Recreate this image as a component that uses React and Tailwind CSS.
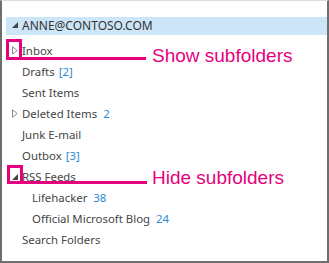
const folders = [
  { name: 'Inbox', arrow: 'closed' },
  { name: 'Drafts', count: '[2]' },
  { name: 'Sent Items' },
  { name: 'Deleted Items', arrow: 'closed', count: '2', wide: true },
  { name: 'Junk E-mail' },
  { name: 'Outbox', count: '[3]' },
  { name: 'RSS Feeds', arrow: 'open' },
  { name: 'Lifehacker', count: '38', wide: true, sub: true },
  { name: 'Official Microsoft Blog', count: '24', wide: true, sub: true },
  { name: 'Search Folders' },
];

function Arrow({ type }) {
  if (type === 'closed') {
    return (
      <svg width="6" height="9" viewBox="0 0 6 9" className="absolute left-[10px] top-[6px]">
        <path d="M0.5 0.8 L5.2 4.5 L0.5 8.2 Z" fill="none" stroke="#8a8a8a" strokeWidth="1" />
      </svg>
    );
  }
  return (
    <svg width="6" height="6" viewBox="0 0 6 6" className="absolute left-[10px] top-[8px]">
      <path d="M6 0 L6 6 L0 6 Z" fill="#444" />
    </svg>
  );
}

export default function App() {
  return (
    <div className="relative w-[329px] h-[263px] bg-white border-t border-t-[#dcdcdc] border-x-2 border-b-2 border-[#6e6e6e] overflow-hidden" style={{ fontFamily: '"Noto Sans", sans-serif' }}>
      {/* account header */}
      <div className="mt-[16px] ml-[4px] h-[18px] bg-[#cde6f7] relative flex items-center pl-[16px] text-[12px] text-[#333]">
        <svg width="6" height="6" viewBox="0 0 6 6" className="absolute left-[6px] top-[5px]">
          <path d="M6 0 L6 6 L0 6 Z" fill="#444" />
        </svg>
        ANNE@CONTOSO.COM
      </div>

      {/* folder list */}
      <div className="mt-[5px] flex flex-col">
        {folders.map((f) => (
          <div key={f.name} className={`relative h-[21px] flex items-center text-[11.4px] text-[#444] ${f.sub ? 'pl-[30px]' : 'pl-[20px]'}`}>
            {f.arrow && <Arrow type={f.arrow} />}
            <span>{f.name}</span>
            {f.count && <span className={`text-[#2b8ad6] ${f.wide ? 'ml-[6px]' : 'ml-[4px]'}`}>{f.count}</span>}
          </div>
        ))}
      </div>

      {/* annotations */}
      <div className="absolute left-[4px] top-[38px] w-[16px] h-[21px] border-[3px] border-[#e5007d]" />
      <div className="absolute left-[4px] top-[56px] w-[140px] h-[3px] bg-[#e5007d]" />
      <div className="absolute left-[150px] top-[44px] text-[19px] leading-[22px] text-[#e5007d]" style={{ fontFamily: '"Liberation Sans", Arial, sans-serif' }}>Show subfolders</div>

      <div className="absolute left-[5px] top-[164px] w-[16px] h-[19px] border-[3px] border-[#e5007d]" />
      <div className="absolute left-[5px] top-[180px] w-[140px] h-[3px] bg-[#e5007d]" />
      <div className="absolute left-[150px] top-[166px] text-[19px] leading-[22px] text-[#e5007d]" style={{ fontFamily: '"Liberation Sans", Arial, sans-serif' }}>Hide subfolders</div>
    </div>
  );
}
